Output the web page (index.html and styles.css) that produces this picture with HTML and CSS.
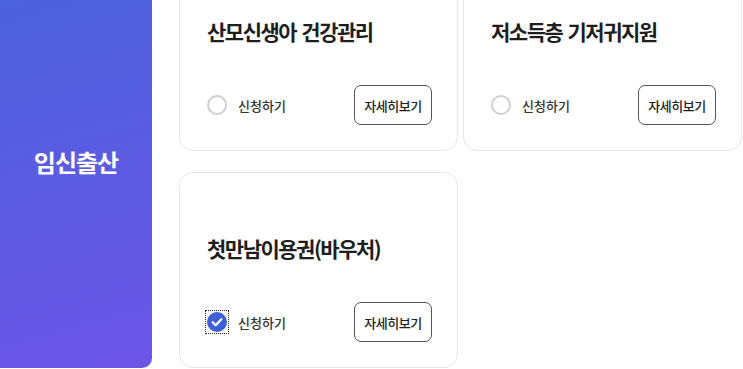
FILE: index.html
```html
<!DOCTYPE html>
<html>
<head>
    <link rel="stylesheet" href="styles.css">
</head>
<body>

<div class="wrap">
    <!-- Category -->
    <div class="side">
        <h2>임신출산</h2>
    </div>

    <!-- Service cards -->
    <div class="cards">
        <div class="card">
            <h3>산모신생아 건강관리</h3>
            <div class="row">
                <label class="apply"><span class="radio"></span>신청하기</label>
                <button type="button" class="more">자세히보기</button>
            </div>
        </div>
        <div class="card">
            <h3>저소득층 기저귀지원</h3>
            <div class="row">
                <label class="apply"><span class="radio"></span>신청하기</label>
                <button type="button" class="more">자세히보기</button>
            </div>
        </div>
        <div class="card">
            <h3>첫만남이용권(바우처)</h3>
            <div class="row">
                <label class="apply">
                    <span class="radio checked">
                        <svg width="20" height="20" viewBox="0 0 20 20">
                            <circle cx="10" cy="10" r="10" fill="#3e5fd8"/>
                            <path d="M5.6 10.2 L8.7 13.2 L14.4 7.2" fill="none" stroke="#fff" stroke-width="2.2" stroke-linecap="round" stroke-linejoin="round"/>
                        </svg>
                    </span>신청하기</label>
                <button type="button" class="more">자세히보기</button>
            </div>
        </div>
    </div>
</div>

</body>
</html>
```

FILE: styles.css
```css
/* General Styling */
body {
    margin: 0;
    padding: 0;
    background-color: #fff;
    font-family: "Noto Sans CJK KR", "Noto Sans", sans-serif;
    color: #222;
    overflow: hidden;
}

.wrap {
    display: flex;
    margin-top: -45px;
}

/* Category panel */
.side {
    width: 152px;
    height: 413px;
    flex-shrink: 0;
    border-radius: 0 10px 10px 0;
    background: linear-gradient(165deg, #4862da 0%, #5a5ce2 50%, #6e55e8 100%);
    display: flex;
    align-items: center;
    justify-content: center;
}

.side h2 {
    margin: 0;
    color: #fff;
    font-size: 24px;
    font-weight: bold;
    letter-spacing: -1px;
}

/* Cards */
.cards {
    margin-left: 27px;
    display: grid;
    grid-template-columns: 279px 279px;
    column-gap: 5px;
    row-gap: 21px;
}

.card {
    box-sizing: border-box;
    height: 196px;
    border: 1px solid #e6e6e6;
    border-radius: 14px;
    padding: 0 25px 25px 27px;
    display: flex;
    flex-direction: column;
    justify-content: flex-end;
}

.card h3 {
    margin: 0 0 40px 0;
    font-size: 21px;
    line-height: 28px;
    font-weight: bold;
    letter-spacing: -1.5px;
    word-spacing: 2px;
    color: #1e1e1e;
}

.row {
    display: flex;
    justify-content: space-between;
    align-items: center;
}

.apply {
    display: flex;
    align-items: center;
    font-size: 13px;
    font-weight: 500;
    color: #333;
}

.radio {
    box-sizing: border-box;
    width: 20px;
    height: 20px;
    border: 2px solid #cfcfcf;
    border-radius: 50%;
    margin-right: 11px;
}

.radio.checked {
    border: none;
    border-radius: 0;
    outline: 1px dotted #222;
    outline-offset: 1px;
}

.radio.checked svg {
    display: block;
}

button.more {
    width: 78px;
    height: 40px;
    padding: 0;
    border: 1px solid #555;
    border-radius: 7px;
    background: #fff;
    font-family: inherit;
    font-size: 13px;
    font-weight: 500;
    letter-spacing: -0.5px;
    color: #222;
    cursor: pointer;
}
```
